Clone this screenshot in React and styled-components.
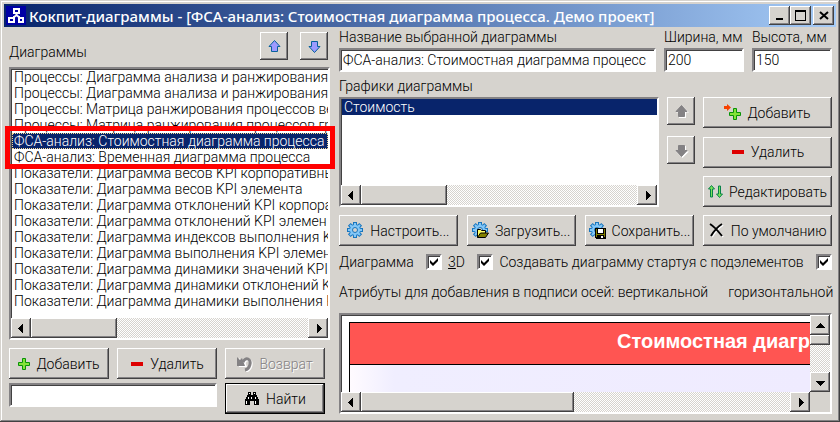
import React, { useState } from 'react';
import styled, { createGlobalStyle, css } from 'styled-components';

const FACE = '#d6d3ce';
const NAVY = '#08246b';

const GlobalStyle = createGlobalStyle`
  * {
    box-sizing: border-box;
  }

  body {
    margin: 0;
    background: ${FACE};
    color: #000;
    font: 300 14px/16px Roboto, 'Liberation Sans', sans-serif;
  }

  button, input {
    font: inherit;
    color: inherit;
  }

  svg {
    flex: none;
  }
`;

const raised = css`
  background: ${FACE};
  border: 0;
  border-radius: 0;
  box-shadow: inset -1px -1px #424142, inset 1px 1px #fff, inset -2px -2px #848284;
`;

const sunken = css`
  background: #fff;
  border: 2px solid;
  border-color: #848284 #fff #fff #848284;
  box-shadow: inset 1px 1px #424142;
`;

const Window = styled.div`
  display: flex;
  flex-direction: column;
  min-height: 100vh;
  padding: 4px;
  overflow: hidden;
  background: ${FACE};
  box-shadow: inset -1px -1px #424142, inset 1px 1px ${FACE}, inset -2px -2px #848284,
    inset 2px 2px #fff;
`;

const TitleBar = styled.header`
  display: flex;
  align-items: center;
  height: 23px;
  padding: 0 2px;
  background: linear-gradient(to right, ${NAVY}, #a5cbf7);
`;

const Title = styled.h1`
  flex: 1;
  margin: 0;
  padding-left: 3px;
  overflow: hidden;
  color: #fff;
  font: 500 15px/20px 'Noto Sans', 'Open Sans', sans-serif;
  white-space: nowrap;
`;

const CaptionButton = styled.button`
  ${raised}
  display: flex;
  align-items: center;
  justify-content: center;
  width: 21px;
  height: 19px;
  padding: 0;
  margin-left: ${(props) => (props.$apart ? '2px' : '0')};
`;

const Body = styled.main`
  display: flex;
  flex: 1;
  gap: 9px;
  padding: 2px 4px 4px 5px;
`;

const LeftPane = styled.section`
  display: flex;
  flex-direction: column;
  flex: 0 0 321px;
  min-width: 0;
`;

const RightPane = styled.section`
  display: flex;
  flex: 1;
  flex-direction: column;
  min-width: 0;
`;

const ListHeader = styled.div`
  display: flex;
  align-items: flex-end;
  gap: 12px;
  height: 38px;
  padding: 0 2px 7px 0;
`;

const ListTitle = styled.span`
  flex: 1;
`;

const ListBox = styled.div`
  ${sunken}
  display: flex;
  flex: ${(props) => (props.$grow ? '1' : 'none')};
  flex-direction: column;
  min-width: 0;
`;

const Options = styled.ul`
  flex: 1;
  margin: 0;
  padding: 0 0 9px 1px;
  overflow: hidden;
  list-style: none;
`;

const Option = styled.li`
  padding-left: 2px;
  white-space: nowrap;
  cursor: default;
  ${(props) =>
    props.$selected &&
    css`
      background: ${NAVY};
      color: #fff;
      outline: ${props.$focused ? '1px dotted #f7db94' : 'none'};
      outline-offset: -1px;
    `}
`;

const Framed = styled.div`
  position: relative;
`;

const Highlight = styled.div`
  position: absolute;
  top: 59px;
  left: -4px;
  width: 330px;
  height: 43px;
  border: 5px solid #ff0000;
  pointer-events: none;
`;

const Track = styled.div`
  display: flex;
  flex: ${(props) => (props.$vertical ? '1' : 'none')};
  flex-direction: ${(props) => (props.$vertical ? 'column' : 'row')};
  width: ${(props) => (props.$vertical ? '20px' : 'auto')};
  height: ${(props) => (props.$vertical ? 'auto' : '20px')};
  background: repeating-conic-gradient(#fff 0 25%, ${FACE} 0 50%) 0 0 / 2px 2px;
`;

const TrackButton = styled.button`
  ${raised}
  display: flex;
  align-items: center;
  justify-content: center;
  flex: none;
  width: 20px;
  height: 20px;
  padding: 0;
`;

const Thumb = styled.div`
  ${raised}
  flex: 0 0 ${(props) => props.$size};
`;

const Spacer = styled.div`
  flex: 1;
`;

const PushButton = styled.button`
  ${raised}
  display: flex;
  align-items: center;
  justify-content: center;
  gap: 6px;
  height: 31px;
  padding: 0 4px;
  white-space: nowrap;

  &:disabled {
    color: #848284;
    text-shadow: 1px 1px #fff;
  }

  ${(props) =>
    props.$default &&
    css`
      border: 1px solid #000;
    `}
`;

const ArrowButton = styled(PushButton)`
  width: 28px;
  height: 28px;
  padding: 0;
`;

const LeftActions = styled.div`
  display: grid;
  grid-template-columns: repeat(3, 1fr);
  gap: 4px 8px;
  padding: 8px 5px 0 0;
`;

const Input = styled.input`
  ${sunken}
  width: 100%;
  height: 24px;
  padding: 0 2px;
  border-radius: 0;
  outline: 0;
`;

const SearchInput = styled(Input)`
  grid-column: span 2;
`;

const Fields = styled.div`
  display: flex;
  gap: 8px;
`;

const Field = styled.label`
  display: flex;
  flex: ${(props) => (props.$wide ? '1' : '0 0 80px')};
  flex-direction: column;
  gap: 3px;
  white-space: nowrap;
`;

const GraphsTitle = styled.span`
  margin: 6px 0 3px;
`;

const Graphs = styled.div`
  display: flex;
  gap: 8px;
  height: 110px;
`;

const ArrowColumn = styled.div`
  display: flex;
  flex-direction: column;
  gap: 11px;
`;

const ButtonColumn = styled.div`
  display: flex;
  flex: 0 0 129px;
  flex-direction: column;
  justify-content: space-between;
`;

const Settings = styled.div`
  display: grid;
  grid-template-columns: 12fr 11fr 11fr 13fr;
  gap: 9px;
  margin-top: 8px;
`;

const Checks = styled.div`
  display: flex;
  align-items: center;
  justify-content: space-between;
  height: 16px;
  margin-top: 8px;
  white-space: nowrap;
`;

const CheckLabel = styled.label`
  display: flex;
  align-items: center;
  gap: 6px;
`;

const CheckInput = styled.input`
  ${sunken}
  appearance: none;
  width: 16px;
  height: 16px;
  margin: 0;

  &:checked {
    background: #fff
      url("data:image/svg+xml,%3Csvg xmlns='http://www.w3.org/2000/svg' viewBox='0 0 12 12'%3E%3Cpath d='M2 4v3l3 3 5-5V2L5 7z'/%3E%3C/svg%3E")
      center / 12px 12px no-repeat;
  }
`;

const Attributes = styled.div`
  display: flex;
  gap: 20px;
  margin: 14px 0 13px;
  white-space: nowrap;
`;

const Preview = styled.div`
  ${sunken}
  display: flex;
  flex: 1;
  min-height: 100px;
`;

const PreviewMain = styled.div`
  display: flex;
  flex: 1;
  flex-direction: column;
  min-width: 0;
`;

const PreviewSide = styled.div`
  display: flex;
  flex-direction: column;
  padding-bottom: 20px;
  background: ${FACE};
`;

const Canvas = styled.div`
  flex: 1;
  padding: 7px 0 0 8px;
  overflow: hidden;
`;

const Chart = styled.div`
  height: 100%;
  border: solid #000;
  border-width: 1px 0 0 1px;
  background: linear-gradient(to right, #fffbff, #f0eeff 44px, #efebff);
`;

const ChartTitle = styled.div`
  height: 42px;
  padding-left: 267px;
  overflow: hidden;
  border-bottom: 1px solid #000;
  background: #ff5552;
  color: #fff;
  font: bold 20px/36px 'Liberation Sans', sans-serif;
  white-space: nowrap;
`;

const ARROWS = {
  left: 'M7 1v9L2 5.5z',
  right: 'M4 1v9l5-4.5z',
  up: 'M1 8h9L5.5 3z',
  down: 'M1 4h9L5.5 9z',
};

const Triangle = ({ dir }) => (
  <svg width="11" height="11" shapeRendering="crispEdges">
    <path d={ARROWS[dir]} />
  </svg>
);

const BigArrow = ({ down, gray }) => (
  <svg width="15" height="15" viewBox="0 0 15 15">
    {gray && (
      <path
        transform={down ? 'rotate(180 7.5 7.5) translate(-1 -1)' : 'translate(1 1)'}
        d="M7.5 1L14 7.500h-3v5.500H4V7.500H1z"
        fill="#fff"
      />
    )}
    <path
      transform={down ? 'rotate(180 7.5 7.5)' : undefined}
      d="M7.5 1.500L13 7.500h-2.500v5h-6v-5H2z"
      fill={gray ? '#848284' : '#9c9aff'}
      stroke={gray ? '#848284' : '#08619c'}
    />
  </svg>
);

const PlusShape = ({ x = 0, y = 0 }) => (
  <path
    transform={`translate(${x} ${y})`}
    d="M4.500.5h3v4h4v3h-4v4h-3v-4h-4v-3h4z"
    fill="#84e339"
    stroke="#089208"
  />
);

const PlusIcon = () => (
  <svg width="12" height="12">
    <PlusShape />
  </svg>
);

const AddGraphIcon = () => (
  <svg width="17" height="17">
    <path d="M0 2h3V0l4 3.500L3 7V5H0z" fill="#f74100" />
    <PlusShape x={5} y={4} />
  </svg>
);

const MinusIcon = () => (
  <svg width="14" height="12">
    <path d="M1 4h12v4H1z" fill="#de0000" />
  </svg>
);

const UndoIcon = () => (
  <svg width="16" height="16" fill="none">
    <path d="M9 15c5-1 7-9 3-11-2-1-4 1-5 3" stroke="#fff" strokeWidth="3" />
    <path d="M1 1l3 3 2-2 3 8H1z" transform="translate(1 1)" fill="#fff" />
    <path d="M8 14c5-1 7-9 3-11-2-1-4 1-5 3" stroke="#848284" strokeWidth="3" />
    <path d="M0 1l3 3 2-2 3 8H0z" fill="#848284" />
  </svg>
);

const BinocularsIcon = () => (
  <svg width="16" height="14" shapeRendering="crispEdges">
    <path d="M4 0h3v3h2V0h3v3h1v2h1v2h1v6h-5V9H6v4H1V7h1V5h1V3h1z" />
    <path d="M5 1h1v1H5zM10 1h1v1h-1zM4 5h1v2H4zM11 5h1v2h-1zM2 9h1v3H2zM11 9h1v3h-1zM7 5h1v2H7z" fill="#fff" />
  </svg>
);

const SwapIcon = () => (
  <svg width="15" height="13" fill="#7be35a" stroke="#08824a">
    <path d="M3.500.5l3 3.500h-2v8h-2V4h-2z" />
    <path d="M11.500 12.500l3-3.500h-2V1h-2v8h-2z" />
  </svg>
);

const CrossIcon = () => (
  <svg width="16" height="15" fill="none">
    <path d="M3 2c4 3 7 7 11 12M14 2C9 5 6 9 3 14" stroke="#fff" strokeWidth="2" />
    <path d="M1 1c5 3 8 7 12 12M13 1C8 4 5 8 2 13" stroke="#000" strokeWidth="2" />
  </svg>
);

const GearIcon = ({ badge }) => (
  <svg width="17" height="17" viewBox="0 0 17 17">
    <g stroke="#1875bd" strokeWidth="4">
      <path d="M8 0v16M0 8h16M2.300 2.300l11.400 11.400M13.700 2.300L2.300 13.700" />
    </g>
    <circle cx="8" cy="8" r="6" fill="#2986ce" />
    <g stroke="#84c7f7" strokeWidth="2">
      <path d="M8 1v14M1 8h14M3 3l10 10M13 3L3 13" />
    </g>
    <circle cx="8" cy="8" r="5" fill="#84c7f7" />
    <circle cx="8" cy="8" r="2.500" fill={FACE} stroke="#1875bd" />
    {badge === 'folder' && (
      <g stroke="#000">
        <path d="M5.500 15.500v-8h3l1 1h4v3" fill="#ffff63" />
        <path d="M5.500 15.500l3-4.500h8l-3 4.500z" fill="#848200" />
      </g>
    )}
    {badge === 'disk' && (
      <g shapeRendering="crispEdges">
        <path d="M6 6h11v11H7l-1-1z" />
        <path d="M7 7h1v8H7zM15 7h1v8h-1zM8 12h7v1H8z" fill="#848200" />
        <path d="M9 7h5v4H9zM12 14h2v2h-2z" fill="#fff" />
      </g>
    )}
  </svg>
);

const AppIcon = () => (
  <svg width="20" height="19">
    <path d="M0 0h20v19H0z" fill="#0000a5" />
    <path d="M8 3h5v4H8zM3 12h5v4H3zM13 12h4v4h-4z" fill="none" stroke="#fff" strokeWidth="2" />
    <path d="M10 8h1v1l3 2h-2l-1.500-1L9 11H7l3-2z" fill="#fff" stroke="#fff" />
  </svg>
);

const ScrollBar = ({ vertical, thumb }) => (
  <Track $vertical={vertical}>
    <TrackButton aria-label={vertical ? 'Вверх' : 'Влево'}>
      <Triangle dir={vertical ? 'up' : 'left'} />
    </TrackButton>
    <Thumb $size={thumb} />
    <Spacer />
    <TrackButton aria-label={vertical ? 'Вниз' : 'Вправо'}>
      <Triangle dir={vertical ? 'down' : 'right'} />
    </TrackButton>
  </Track>
);

const DIAGRAMS = [
  'Процессы: Диаграмма анализа и ранжирования',
  'Процессы: Диаграмма анализа и ранжирования',
  'Процессы: Матрица ранжирования процессов ве',
  'Процессы: Матрица ранжирования процессов гр',
  'ФСА-анализ: Стоимостная диаграмма процесса',
  'ФСА-анализ: Временная диаграмма процесса',
  'Показатели: Диаграмма весов KPI корпоративны',
  'Показатели: Диаграмма весов KPI элемента',
  'Показатели: Диаграмма отклонений KPI корпора',
  'Показатели: Диаграмма отклонений KPI элемен',
  'Показатели: Диаграмма индексов выполнения K',
  'Показатели: Диаграмма выполнения KPI элемен',
  'Показатели: Диаграмма динамики значений KPI',
  'Показатели: Диаграмма динамики отклонений K',
  'Показатели: Диаграмма динамики выполнения K',
];

const App = () => {
  const [selected, setSelected] = useState(4);

  return (
    <Window>
      <GlobalStyle />
      <TitleBar>
        <AppIcon />
        <Title>Кокпит-диаграммы - [ФСА-анализ: Стоимостная диаграмма процесса. Демо проект]</Title>
        <CaptionButton aria-label="Свернуть">
          <svg width="12" height="11">
            <path d="M2 8h7v2H2z" />
          </svg>
        </CaptionButton>
        <CaptionButton aria-label="Развернуть">
          <svg width="12" height="11" shapeRendering="crispEdges">
            <path d="M0 0h11v11H0zM1 2v8h9V2z" fillRule="evenodd" />
          </svg>
        </CaptionButton>
        <CaptionButton aria-label="Закрыть" $apart>
          <svg width="12" height="11">
            <path d="M2 2l8 7M10 2L2 9" stroke="#000" strokeWidth="2" />
          </svg>
        </CaptionButton>
      </TitleBar>
      <Body>
        <LeftPane>
          <ListHeader>
            <ListTitle id="diagrams">Диаграммы</ListTitle>
            <ArrowButton aria-label="Переместить вверх">
              <BigArrow />
            </ArrowButton>
            <ArrowButton aria-label="Переместить вниз">
              <BigArrow down />
            </ArrowButton>
          </ListHeader>
          <Framed>
            <ListBox>
              <Options role="listbox" aria-labelledby="diagrams">
                {DIAGRAMS.map((name, index) => (
                  <Option
                    key={index}
                    role="option"
                    aria-selected={index === selected}
                    $selected={index === selected}
                    $focused
                    onClick={() => setSelected(index)}
                  >
                    {name}
                  </Option>
                ))}
              </Options>
              <ScrollBar thumb="86px" />
            </ListBox>
            {/* Marks the two cost analysis diagrams */}
            <Highlight />
          </Framed>
          <LeftActions>
            <PushButton>
              <PlusIcon />
              Добавить
            </PushButton>
            <PushButton>
              <MinusIcon />
              Удалить
            </PushButton>
            <PushButton disabled>
              <UndoIcon />
              Возврат
            </PushButton>
            <SearchInput aria-label="Найти" />
            <PushButton $default>
              <BinocularsIcon />
              Найти
            </PushButton>
          </LeftActions>
        </LeftPane>
        <RightPane>
          <Fields>
            <Field $wide>
              Название выбранной диаграммы
              <Input defaultValue="ФСА-анализ: Стоимостная диаграмма процесс" />
            </Field>
            <Field>
              Ширина, мм
              <Input defaultValue="200" />
            </Field>
            <Field>
              Высота, мм
              <Input defaultValue="150" />
            </Field>
          </Fields>
          <GraphsTitle id="graphs">Графики диаграммы</GraphsTitle>
          <Graphs>
            <ListBox $grow>
              <Options role="listbox" aria-labelledby="graphs">
                <Option role="option" aria-selected $selected>
                  Стоимость
                </Option>
              </Options>
              <ScrollBar thumb="86px" />
            </ListBox>
            <ArrowColumn>
              <ArrowButton aria-label="График вверх">
                <BigArrow gray />
              </ArrowButton>
              <ArrowButton aria-label="График вниз">
                <BigArrow gray down />
              </ArrowButton>
            </ArrowColumn>
            <ButtonColumn>
              <PushButton>
                <AddGraphIcon />
                Добавить
              </PushButton>
              <PushButton>
                <MinusIcon />
                Удалить
              </PushButton>
              <PushButton>
                <SwapIcon />
                Редактировать
              </PushButton>
            </ButtonColumn>
          </Graphs>
          <Settings>
            <PushButton>
              <GearIcon />
              Настроить...
            </PushButton>
            <PushButton>
              <GearIcon badge="folder" />
              Загрузить...
            </PushButton>
            <PushButton>
              <GearIcon badge="disk" />
              Сохранить...
            </PushButton>
            <PushButton>
              <CrossIcon />
              По умолчанию
            </PushButton>
          </Settings>
          <Checks>
            <span>Диаграмма</span>
            <CheckLabel>
              <CheckInput type="checkbox" defaultChecked />
              <span>
                <u>3</u>D
              </span>
            </CheckLabel>
            <CheckLabel>
              <CheckInput type="checkbox" defaultChecked />
              Создавать диаграмму стартуя с подэлементов
            </CheckLabel>
            <CheckInput type="checkbox" defaultChecked aria-label="Дополнительно" />
          </Checks>
          <Attributes>
            <span>Атрибуты для добавления в подписи осей: вертикальной</span>
            <span>горизонтальной</span>
          </Attributes>
          <Preview>
            <PreviewMain>
              <Canvas>
                <Chart>
                  <ChartTitle>Стоимостная диаграмма</ChartTitle>
                </Chart>
              </Canvas>
              <ScrollBar thumb="213px" />
            </PreviewMain>
            <PreviewSide>
              <ScrollBar vertical thumb="10px" />
            </PreviewSide>
          </Preview>
        </RightPane>
      </Body>
    </Window>
  );
};

export default App;
